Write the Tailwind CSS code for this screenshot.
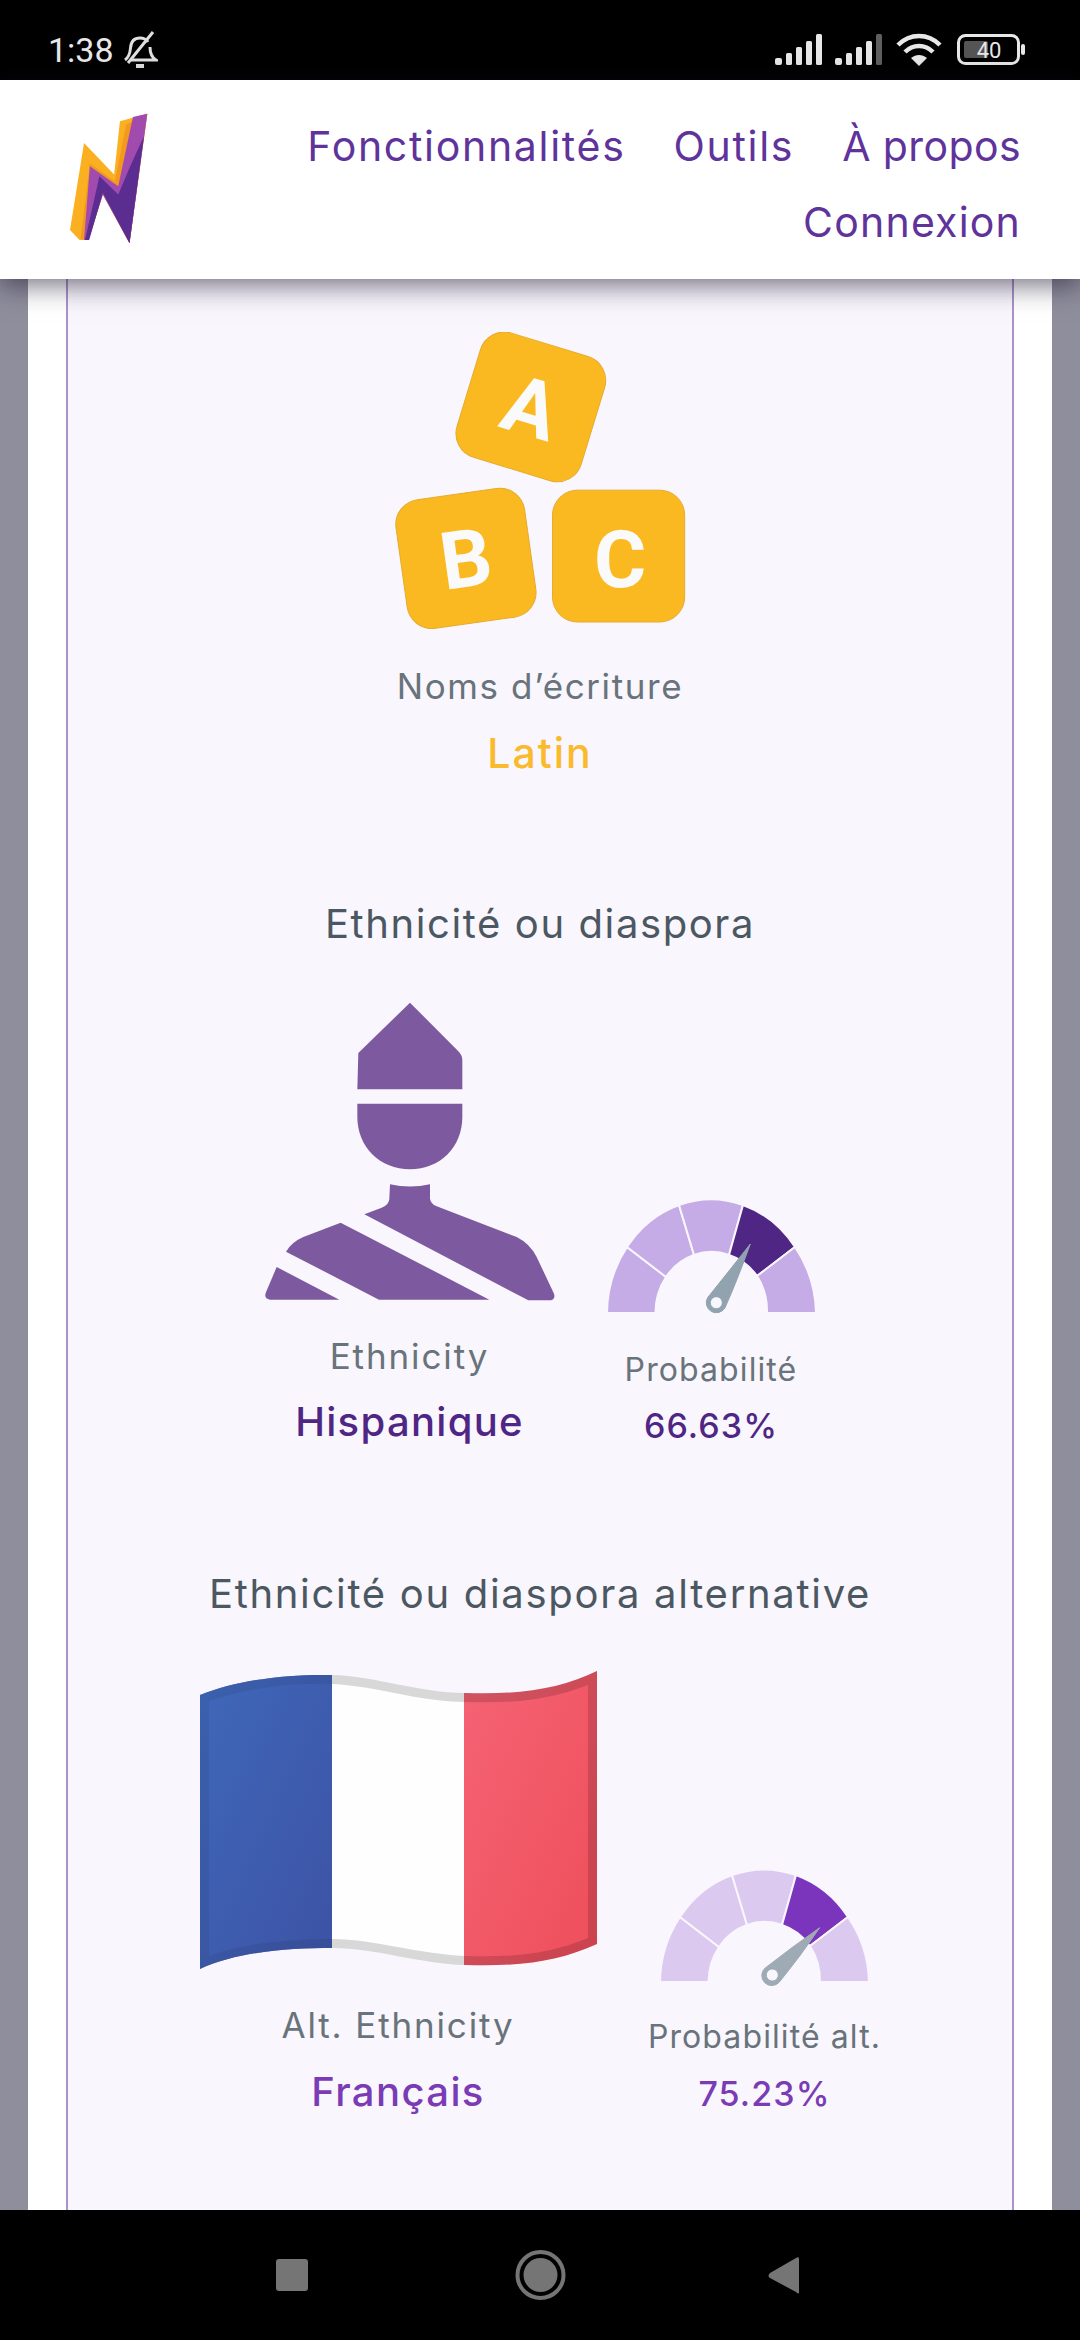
<!DOCTYPE html>
<html lang="fr">
<head>
    <meta charset="UTF-8">
    <meta name="viewport" content="width=device-width, initial-scale=1.0">
    <title>Noms</title>
    <script src="https://cdn.jsdelivr.net/npm/@tailwindcss/browser@4"></script>
</head>
<body class="bg-black">
<div class="w-[1080px] h-[2340px] flex flex-col overflow-hidden font-[Inter,'Noto_Sans',sans-serif]">

    <!-- status bar -->
    <div class="h-[80px] shrink-0 bg-black flex items-center justify-between pt-[19px] pl-[48px] pr-[55px] text-[#e8e8e8]">
        <div class="flex items-center gap-[8px]">
            <span class="font-[Roboto,sans-serif] text-[34px] leading-none">1:38</span>
            <svg width="36" height="38" viewBox="0 0 36 38" fill="none" stroke="#e0e0e0" stroke-width="3">
                <path d="M3 29c4-3 5-6 5.500-12C9 10 13 7 18 7c3 0 6 1 8 4M28 16c0 6 1 10 6 13H8" />
                <path d="M6 32 31 1" />
                <path d="M14 35h8" stroke-width="4" />
            </svg>
        </div>
        <div class="flex items-center">
            <svg width="47" height="31" viewBox="0 0 47 31" fill="#e8e8e8">
                <rect x="0" y="24" width="7" height="7" rx="2" />
                <rect x="11" y="19" width="6" height="12" rx="1.500" />
                <rect x="21" y="13" width="6" height="18" rx="1.500" />
                <rect x="31" y="7" width="6" height="24" rx="1.500" />
                <rect x="41" y="0" width="6" height="31" rx="1.500" />
            </svg>
            <svg class="ml-[13px]" width="48" height="31" viewBox="0 0 48 31" fill="#e8e8e8">
                <rect x="0" y="24" width="7" height="7" rx="2" />
                <rect x="11" y="19" width="6" height="12" rx="1.500" />
                <rect x="21" y="13" width="6" height="18" rx="1.500" />
                <rect x="31" y="7" width="6" height="24" rx="1.500" />
                <rect x="41" y="0" width="6" height="31" rx="1.500" fill="#5f5f5f" />
            </svg>
            <svg class="ml-[13px]" width="46" height="34" viewBox="0 0 46 34" fill="none" stroke="#e8e8e8" stroke-width="4.500">
                <path d="M2 12C14 0 32 0 44 12" />
                <path d="M9 19C17 11 29 11 37 19" />
                <path d="M23 33 15 25C20 21 26 21 31 25Z" fill="#e8e8e8" stroke="none" />
            </svg>
            <svg class="ml-[15px]" width="68" height="31" viewBox="0 0 68 31">
                <rect x="1.500" y="1.500" width="60" height="28" rx="7" fill="none" stroke="#e8e8e8" stroke-width="3" />
                <rect x="7" y="7" width="24" height="17" rx="2" fill="#555555" />
                <rect x="64" y="10" width="4" height="11" rx="2" fill="#e8e8e8" />
                <text x="32" y="24" text-anchor="middle" font-family="Roboto" font-size="22" fill="#e8e8e8">40</text>
            </svg>
        </div>
    </div>

    <!-- header -->
    <header class="relative z-10 h-[199px] shrink-0 bg-white flex justify-between items-start shadow-[0_6px_26px_rgba(20,15,40,0.6)]">
        <svg class="ml-[70px] mt-[33px]" width="78" height="131" viewBox="204 340 228 394" preserveAspectRatio="none">
            <path d="M204 692 245 430 333 525 350 365 430 342 378 732 300 585 258 722 232 722Z" fill="#fbb022" />
            <path d="M235 720 262 492 335 545 368 375 430 342 378 732 300 585 258 722Z" fill="#f39a1e" />
            <path d="M245 722 262 500 345 560 388 352 430 342 378 732 300 585 258 722Z" fill="#a24bae" />
            <path d="M248 722 290 530 345 585 380 500 420 410 378 732 300 580 260 722Z" fill="#5b2d91" />
        </svg>
        <nav class="w-[760px] mr-[59px] mt-[28px] flex flex-wrap justify-end gap-x-[48px] text-[#60339b] text-[41px] leading-[76px]">
            <a href="#" class="tracking-[1.7px]">Fonctionnalités</a>
            <a href="#" class="tracking-[1.7px]">Outils</a>
            <a href="#" class="tracking-[0.4px]">À propos</a>
            <a href="#" class="tracking-[1.2px]">Connexion</a>
        </nav>
    </header>

    <!-- page -->
    <main class="flex-1 min-h-0 bg-[#8f8e9c] px-[28px] overflow-hidden">
        <div class="h-full bg-white px-[38px]">
            <div class="h-full bg-[#f9f6fd] border-x-2 border-[#ab93c8] flex flex-col items-center pt-[53px] text-center">

                <svg width="292" height="298" viewBox="105 95 875 895" font-family="Roboto" font-weight="700" font-size="240" text-anchor="middle" fill="#fbb921">
                    <g transform="rotate(17 515 320)">
                        <rect x="320" y="125" width="390" height="390" rx="75" stroke="#e5ab2c" stroke-width="3" />
                        <text x="515" y="405" fill="#fafafa">A</text>
                    </g>
                    <g transform="rotate(-8 320 775)">
                        <rect x="125" y="580" width="390" height="390" rx="75" stroke="#e5ab2c" stroke-width="3" />
                        <text x="320" y="860" fill="#fafafa">B</text>
                    </g>
                    <rect x="580" y="570" width="397" height="396" rx="75" stroke="#e5ab2c" stroke-width="3" />
                    <text x="783" y="860" fill="#fafafa">C</text>
                </svg>
                <p class="mt-[32px] text-[35px] tracking-[1.6px] leading-[48px] text-[#68737b]">Noms d’écriture</p>
                <p class="mt-[17px] text-[41px] tracking-[2px] leading-[52px] font-medium text-[#f9bb2c]">Latin</p>

                <h2 class="mt-[119px] text-[40px] tracking-[1.6px] leading-[52px] text-[#4b5862]">Ethnicité ou diaspora</h2>
                <div class="mt-[52px] flex items-end justify-center gap-[52px]">
                    <div class="w-[290px] flex flex-col items-center">
                        <svg width="290" height="299" viewBox="75 65 870 897" fill="#7d5a9f">
                            <path d="M510 67 655 213Q667 225 667 240L667 327 352 327 355 218Z" />
                            <path d="M352 370 667 370 667 410C667 500 600 567 510 567 420 567 352 500 352 410Z" />
                            <path d="M450 612Q510 625 570 612L570 655Q572 670 590 678L830 770Q870 790 890 830L942 940Q948 960 925 960L865 960 373 702 425 682Q448 672 448 655Z" />
                            <path d="M302 727 748 958 417 958 138 814Q155 785 190 770Z" />
                            <path d="M110 860 298 958 90 958Q72 955 77 938Z" />
                        </svg>
                        <p class="mt-[31px] text-[35px] tracking-[1.9px] leading-[48px] text-[#68737b]">Ethnicity</p>
                        <p class="mt-[16px] text-[40px] tracking-[1.3px] leading-[52px] font-medium text-[#4f2684] whitespace-nowrap">Hispanique</p>
                    </div>
                    <div class="w-[209px] flex flex-col items-center">
                        <svg class="overflow-visible" width="209" height="114" viewBox="0 0 209 114" stroke="#f9f6fd" stroke-width="2">
                            <path d="M0 114A104 114 0 0 1 20 48L59 78A56 61 0 0 0 48.500 114Z" fill="#c5ace6" />
                            <path d="M20 48A104 114 0 0 1 72 6L87 56A56 61 0 0 0 59 78Z" fill="#c5ace6" />
                            <path d="M72 6A104 114 0 0 1 136 6L122 56A56 61 0 0 0 87 56Z" fill="#c5ace6" />
                            <path d="M136 6A104 114 0 0 1 188 48L150 77A56 61 0 0 0 122 56Z" fill="#4f2684" />
                            <path d="M188 48A104 114 0 0 1 209 114L160 114A56 61 0 0 0 150 77Z" fill="#c5ace6" />
                            <path d="M143.300 45Q130 82 118 108.700A10 10 0 1 1 100.600 98.700Q122 72 143.300 45ZM109.300 97.700a6 6 0 1 0 .01 0Z" fill="#90a3ae" fill-rule="evenodd" stroke="#90a3ae" stroke-width="1" stroke-linejoin="round" />
                        </svg>
                        <p class="mt-[35px] text-[32px] tracking-[1.1px] leading-[44px] text-[#68737b] whitespace-nowrap">Probabilité</p>
                        <p class="mt-[12px] text-[34px] tracking-[1.1px] leading-[44px] font-medium text-[#4f2684]">66.63%</p>
                    </div>
                </div>

                <h2 class="mt-[120px] text-[40px] tracking-[1.7px] leading-[52px] text-[#4b5862]">Ethnicité ou diaspora alternative</h2>
                <div class="mt-[51px] flex items-end justify-center gap-[52px]">
                    <div class="w-[397px] flex flex-col items-center">
                        <svg width="397" height="298" viewBox="0 0 397 298">
                            <defs>
                                <linearGradient id="blue" x1="0" y1="0" x2="1" y2="1">
                                    <stop offset="0" stop-color="#3f68ba" />
                                    <stop offset="1" stop-color="#3d52a4" />
                                </linearGradient>
                                <linearGradient id="red" x1="0" y1="0" x2="1" y2="1">
                                    <stop offset="0" stop-color="#f56374" />
                                    <stop offset="1" stop-color="#ee4e5a" />
                                </linearGradient>
                                <clipPath id="flag-shape">
                                    <path d="M0 24C40 8 90 3 132 4 175 5 220 22 265 22 320 24 360 18 397 0L397 273C360 290 320 296 265 294 220 293 175 277 132 277 90 277 40 280 0 298Z" />
                                </clipPath>
                            </defs>
                            <g clip-path="url(#flag-shape)">
                                <rect x="0" y="0" width="133" height="298" fill="url(#blue)" />
                                <rect x="132" y="0" width="133" height="298" fill="#fefefe" />
                                <rect x="264" y="0" width="133" height="298" fill="url(#red)" />
                                <path d="M0 24C40 8 90 3 132 4 175 5 220 22 265 22 320 24 360 18 397 0L397 273C360 290 320 296 265 294 220 293 175 277 132 277 90 277 40 280 0 298Z" fill="none" stroke="#000000" stroke-opacity="0.15" stroke-width="18" />
                                <rect x="0" y="0" width="132" height="298" fill="url(#blue)" opacity="0.55" />
                            </g>
                        </svg>
                        <p class="mt-[32px] text-[35px] tracking-[1.85px] leading-[48px] text-[#68737b] whitespace-nowrap">Alt. Ethnicity</p>
                        <p class="mt-[17px] text-[40px] tracking-[1.4px] leading-[52px] font-medium text-[#7a3bb5]">Français</p>
                    </div>
                    <div class="w-[232px] pb-[2px] flex flex-col items-center">
                        <svg class="overflow-visible" width="209" height="113" viewBox="0 0 209 113" stroke="#f9f6fd" stroke-width="2">
                            <path d="M0 113A104 113 0 0 1 20 48L59 78A56 61 0 0 0 48.500 113Z" fill="#dcc9f0" />
                            <path d="M20 48A104 113 0 0 1 72 6L87 56A56 61 0 0 0 59 78Z" fill="#dcc9f0" />
                            <path d="M72 6A104 113 0 0 1 136 6L122 56A56 61 0 0 0 87 56Z" fill="#dcc9f0" />
                            <path d="M136 6A104 113 0 0 1 188 48L150 77A56 61 0 0 0 122 56Z" fill="#7b35bd" />
                            <path d="M188 48A104 113 0 0 1 209 113L160 113A56 61 0 0 0 150 77Z" fill="#dcc9f0" />
                            <path d="M159.700 58.700Q140 88 119.400 113A10 10 0 1 1 105.200 99Q132 78 159.700 58.700ZM112.300 100a6 6 0 1 0 .01 0Z" fill="#9eabb4" fill-rule="evenodd" stroke="#9eabb4" stroke-width="1" stroke-linejoin="round" />
                        </svg>
                        <p class="mt-[33px] text-[32px] tracking-[1.1px] leading-[44px] text-[#68737b] whitespace-nowrap">Probabilité alt.</p>
                        <p class="mt-[13px] text-[34px] tracking-[1.1px] leading-[44px] font-medium text-[#7a3bb5]">75.23%</p>
                    </div>
                </div>

            </div>
        </div>
    </main>

    <!-- android nav bar -->
    <div class="h-[130px] shrink-0 bg-black relative">
        <svg width="1080" height="130" viewBox="0 2210 1080 130" fill="#757575">
            <rect x="276" y="2259" width="32" height="32" rx="3" />
            <circle cx="540.500" cy="2275" r="23" fill="none" stroke="#757575" stroke-width="4" />
            <circle cx="540.500" cy="2275" r="17" />
            <path d="M799 2259V2292Q799 2295 796 2292L770 2278Q767 2276 770 2273L796 2258Q799 2256 799 2259Z" />
        </svg>
    </div>
</div>
</body>
</html>
